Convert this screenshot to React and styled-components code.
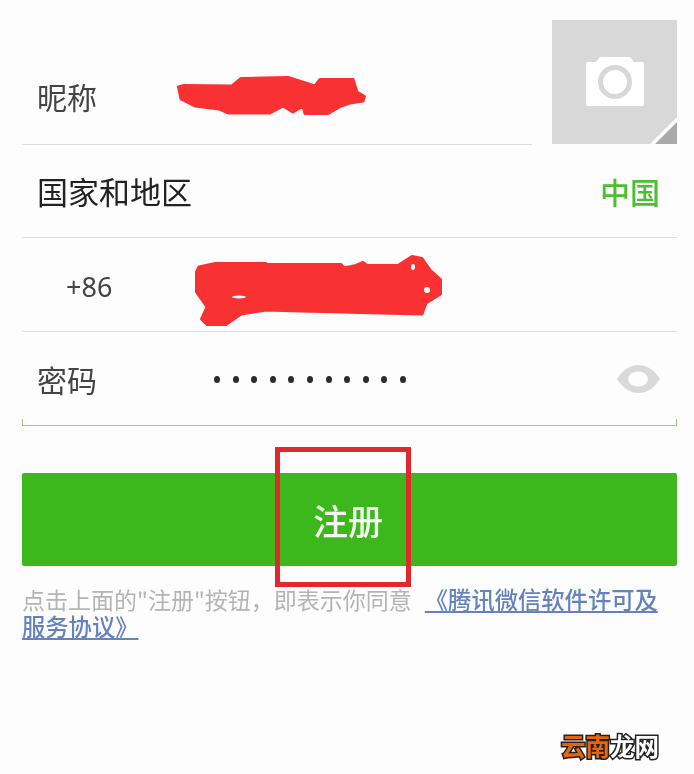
import React from 'react'
import styled, { createGlobalStyle } from 'styled-components'

const GlobalStyle = createGlobalStyle`
  html, body {
    margin: 0;
    padding: 0;
    background: #fdfdfd;
  }

  body {
    font-family: "Noto Sans CJK SC", "Noto Sans", sans-serif;
  }
`

// the reference is a soft, re-encoded photo of a phone screen
const Page = styled.div`
  position: relative;
  box-sizing: border-box;
  width: 694px;
  height: 774px;
  padding: 20px 17px 0 22px;
  overflow: hidden;
  background: #fdfdfd;
  filter: blur(0.4px);
`

const TopRow = styled.div`
  display: flex;
  gap: 20px;
  height: 125px;
`

const NameField = styled.div`
  flex: 1;
  display: flex;
  align-items: flex-end;
  padding-bottom: 28px;
  box-sizing: border-box;
  border-bottom: 1px solid #dcdcdc;
`

const Photo = styled.div`
  position: relative;
  width: 125px;
  height: 124px;
  display: flex;
  align-items: center;
  justify-content: center;
  padding-bottom: 2px;
  box-sizing: border-box;
  background: #d8d8d8;

  &::before {
    content: '';
    position: absolute;
    right: 0;
    bottom: 0;
    width: 27px;
    height: 27px;
    background: #fdfdfd;
    clip-path: polygon(100% 0, 100% 100%, 0 100%);
  }

  &::after {
    content: '';
    position: absolute;
    right: 0;
    bottom: 0;
    width: 22px;
    height: 22px;
    background: #a9a9a9;
    clip-path: polygon(100% 0, 100% 100%, 0 100%);
  }
`

const Row = styled.div`
  position: relative;
  display: flex;
  align-items: center;
  justify-content: space-between;
  box-sizing: border-box;
  height: ${props => props.height || 94}px;
  padding-right: 17px;
  border-bottom: 1px solid ${props => (props.active ? '#8fd46f' : '#dcdcdc')};

  ${props => props.active && `
    &::before, &::after {
      content: '';
      position: absolute;
      bottom: 0;
      width: 1px;
      height: 6px;
      background: #8fd46f;
    }
    &::before { left: 0; }
    &::after { right: 0; }
  `}
`

const Label = styled.span`
  flex: none;
  width: 155px;
  box-sizing: border-box;
  padding-left: 15px;
  font-size: 30px;
  line-height: 40px;
  color: #444;
`

const RegionLabel = styled(Label)`
  width: auto;
  font-size: 31px;
  color: #222;
`

const RegionValue = styled.span`
  font-size: 30px;
  font-weight: 500;
  line-height: 40px;
  color: #4bbf2f;
`

const PhoneRow = styled(Row)`
  justify-content: flex-start;
`

const CountryCode = styled.span`
  flex: none;
  width: 173px;
  box-sizing: border-box;
  padding: 4px 0 0 44px;
  font-family: "Noto Sans", sans-serif;
  font-size: 27px;
  color: #444;
`

const PhoneScribble = styled.svg`
  flex: none;
  margin-top: 13px;
`

const Dots = styled.span`
  flex: 1;
  display: flex;
  gap: 12.6px;
  margin: 2px 0 0 37px;
`

const Dot = styled.i`
  width: 6px;
  height: 7px;
  border-radius: 50%;
  background: #2b2b2b;
`

const ButtonWrap = styled.div`
  position: relative;
  margin-top: 47px;
`

const SubmitButton = styled.button`
  display: block;
  width: 100%;
  height: 93px;
  padding: 0 3px 0 0;
  border: 0;
  border-radius: 2px;
  background: #3cb81c;
  color: #f4fbf0;
  font-family: inherit;
  font-size: 35px;
  font-weight: 500;
`

const Highlight = styled.div`
  position: absolute;
  left: 253px;
  top: -26px;
  width: 136px;
  height: 140px;
  box-sizing: border-box;
  border: 5px solid #e1282c;
`

const Tip = styled.p`
  margin: 20px 0 0;
  width: 650px;
  font-size: 23px;
  line-height: 27px;
  color: #b4b4b4;
`

const TermsLink = styled.a`
  margin-left: 13px;
  font-size: 23.3px;
  font-weight: 500;
  color: #6482bd;
  text-decoration: underline;
`

const Watermark = styled.div`
  position: absolute;
  left: 561px;
  top: 730px;
  font-size: 24.5px;
  line-height: 32px;
  font-weight: 700;
  white-space: nowrap;
  color: #fff;
  -webkit-text-stroke: 3px #222;
  paint-order: stroke fill;
`

const Orange = styled.span`
  color: #e8640e;
`

const CameraIcon = () => (
  <svg width="58" height="49" viewBox="0 0 58 49" style={{ position: 'relative' }}>
    <path
      d="M2 5h8l3-4q1-1 3-1h26q2 0 3 1l3 4h8q2 0 2 2v40q0 2-2 2H2q-2 0-2-2V7q0-2 2-2z"
      fill="#fff"
    />
    <circle cx="29" cy="25" r="14.5" fill="none" stroke="#d8d8d8" strokeWidth="5" />
  </svg>
)

const EyeIcon = () => (
  <svg width="43" height="28" viewBox="0 0 43 28">
    <path d="M0 14Q9 0 21.500 0T43 14Q34 28 21.500 28T0 14z" fill="#d9d9d9" />
    <ellipse cx="21" cy="14" rx="10" ry="7.500" fill="#fdfdfd" />
  </svg>
)

const NameScribble = () => (
  <svg width="190" height="40" viewBox="177 77 190 40">
    <path
      d="M178.500 88L184 86.500L232 87L241 79.500L288 78.500L315 87L320 80.500L353 80.500L357 93L364.500 97.500L363 102L350 104L341 107L328 114.500L305 114.500L303 107L293 113L283 107L270 114L228 114L219 110L195 107L181 100z"
      fill="#f83232"
      stroke="#f83232"
      strokeWidth="3"
      strokeLinejoin="round"
    />
  </svg>
)

const PhoneMark = () => (
  <PhoneScribble width="248" height="72" viewBox="195 256 248 72">
    <path
      d="M196.500 273L199 268L215 264.500L266 264.500L268 265.500L341 265.500L344 269L356 266.500L363 263.500L367 266.500L398 266.500L412 257.500L422 259.500L430 271L440.500 280.500L440.500 295L426 304L422 315L301 312L266 311L241 315L226 325.500L207 325.500L201.500 320L207 308L196.500 293z"
      fill="#f83232"
      stroke="#f83232"
      strokeWidth="3"
      strokeLinejoin="round"
    />
    <ellipse cx="239" cy="298" rx="7" ry="1.500" fill="#fdfdfd" />
    <ellipse cx="413" cy="268" rx="2" ry="3" fill="#fdfdfd" />
    <circle cx="427" cy="291" r="3" fill="#fdfdfd" />
  </PhoneScribble>
)

const DOT_COUNT = 11

function App() {
  return (
    <Page>
      <GlobalStyle />
      <TopRow>
        <NameField>
          <Label>昵称</Label>
          <NameScribble />
        </NameField>
        <Photo>
          <CameraIcon />
        </Photo>
      </TopRow>

      <Row height={93}>
        <RegionLabel>国家和地区</RegionLabel>
        <RegionValue>中国</RegionValue>
      </Row>

      <PhoneRow>
        <CountryCode>+86</CountryCode>
        <PhoneMark />
      </PhoneRow>

      <Row active>
        <Label>密码</Label>
        <Dots>
          {Array.from({ length: DOT_COUNT }, (_, i) => <Dot key={i} />)}
        </Dots>
        <EyeIcon />
      </Row>

      <ButtonWrap>
        <SubmitButton>注册</SubmitButton>
        <Highlight />
      </ButtonWrap>

      <Tip>
        点击上面的"注册"按钮，即表示你同意
        <TermsLink>《腾讯微信软件许可及服务协议》</TermsLink>
      </Tip>

      <Watermark><Orange>云南</Orange>龙网</Watermark>
    </Page>
  )
}

export default App
